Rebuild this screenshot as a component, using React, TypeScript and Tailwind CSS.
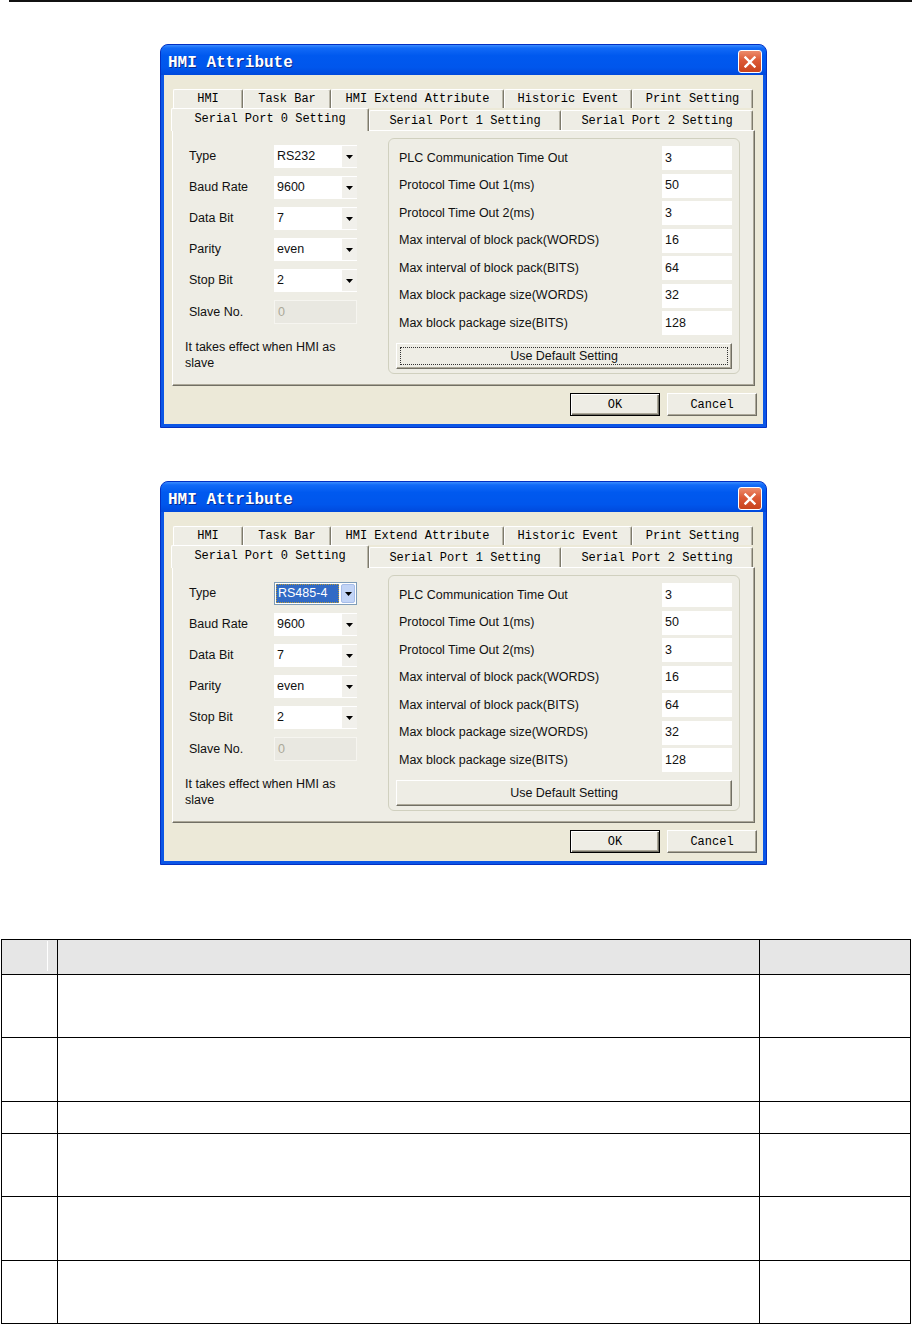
import React from "react"

const mono = "font-['Liberation_Mono','DejaVu_Sans_Mono',monospace]"
const sans = "font-['Liberation_Sans',Arial,sans-serif]"

function Arrow({ className = "" }: { className?: string }) {
  return (
    <svg width="7" height="4" viewBox="0 0 7 4" className={className}>
      <polygon points="0,0 7,0 3.5,4" fill="#000" />
    </svg>
  )
}

function Combo({ value, active }: { value: string; active?: boolean }) {
  if (active) {
    return (
      <div className="flex h-[23px] w-[83px] items-center border border-[#7f9db9] bg-white p-px">
        <div className="flex h-full flex-1 items-center">
          <span className="flex h-[19px] w-[63px] items-center border border-dotted border-[#b89a3a] bg-[#316ac5] pl-[1px] text-white">
            {value}
          </span>
        </div>
        <div className="flex h-full w-[14px] items-center justify-center rounded-[2px] border border-[#a7bde9] bg-[#c2d4f6]">
          <Arrow />
        </div>
      </div>
    )
  }
  return (
    <div className="flex h-[23px] w-[83px] items-center bg-white">
      <span className="flex-1 pl-[3px]">{value}</span>
      <div className="flex h-[21px] w-[15px] items-center justify-center bg-[#f1f0eb]">
        <Arrow />
      </div>
    </div>
  )
}

function Tab({ label, w, h, selected }: { label: string; w: number; h: string; selected?: boolean }) {
  return (
    <div
      style={{ width: w }}
      className={`flex shrink-0 items-center justify-center rounded-t-[2px] border-l border-t border-r border-l-white border-t-white border-r-[#7d7a6c] bg-[#eeede5] shadow-[inset_-1px_0_0_#b9b6a8] ${h} ${
        selected ? "relative z-10 -mb-px pb-[3px]" : ""
      }`}
    >
      {label}
    </div>
  )
}

function ClassicButton({ label, isDefault, focus, className = "" }: { label: string; isDefault?: boolean; focus?: boolean; className?: string }) {
  return (
    <div
      className={`flex items-center justify-center bg-[#eeede5] ${
        isDefault
          ? "border border-black shadow-[inset_1px_1px_0_#fff,inset_-1px_-1px_0_#716f64,inset_-2px_-2px_0_#aca899]"
          : "border border-t-white border-l-white border-r-[#716f64] border-b-[#716f64] shadow-[inset_-1px_-1px_0_#aca899]"
      } ${className}`}
    >
      {focus ? (
        <div className="flex h-[calc(100%-6px)] w-[calc(100%-6px)] items-center justify-center border border-dotted border-[#333]">
          {label}
        </div>
      ) : (
        label
      )}
    </div>
  )
}

const leftRows: [string, string][] = [
  ["Type", "RS232"],
  ["Baud Rate", "9600"],
  ["Data Bit", "7"],
  ["Parity", "even"],
  ["Stop Bit", "2"],
]

const rightRows: [string, string][] = [
  ["PLC Communication Time Out", "3"],
  ["Protocol Time Out 1(ms)", "50"],
  ["Protocol Time Out 2(ms)", "3"],
  ["Max interval of block pack(WORDS)", "16"],
  ["Max interval of block pack(BITS)", "64"],
  ["Max block package size(WORDS)", "32"],
  ["Max block package size(BITS)", "128"],
]

function Dialog({ rs485 }: { rs485?: boolean }) {
  return (
    <div className="w-[607px] overflow-hidden rounded-t-[8px] border border-[#0330c2] bg-[#0b56e6]">
      {/* title bar */}
      <div className="flex h-[30px] items-start justify-between bg-[linear-gradient(180deg,#3b8dff_0%,#126af7_10%,#0059ef_35%,#0056ec_75%,#0049dc_100%)] pl-[7px] pr-[4px]">
        <span className={`${mono} mt-[10px] text-[16px] leading-[16px] font-bold text-white [text-shadow:1px_1px_0_#0a2a90]`}>
          HMI Attribute
        </span>
        <div className="mt-[5px] flex h-[23px] w-[24px] items-center justify-center rounded-[3px] border border-white bg-[linear-gradient(180deg,#ec8c6c_0%,#dc5a36_45%,#c8431d_100%)]">
          <svg width="12" height="12" viewBox="0 0 12 12">
            <path d="M1.5 1.5 L10.5 10.5 M10.5 1.5 L1.5 10.5" stroke="#fff" strokeWidth="2.4" strokeLinecap="square" />
          </svg>
        </div>
      </div>

      {/* body */}
      <div className={`mx-[3px] mb-[3px] flex h-[349px] flex-col bg-[#ece9d8] pt-[14px] ${mono} text-[12px] text-black`}>
        {/* tab row 1 */}
        <div className="ml-[9px] flex h-[19px]">
          <Tab label="HMI" w={70} h="h-[19px]" />
          <Tab label="Task Bar" w={88} h="h-[19px]" />
          <Tab label="HMI Extend Attribute" w={173} h="h-[19px]" />
          <Tab label="Historic Event" w={128} h="h-[19px]" />
          <Tab label="Print Setting" w={121} h="h-[19px]" />
        </div>
        {/* tab row 2 */}
        <div className="ml-[7px] flex h-[22px] items-end">
          <Tab label="Serial Port 0 Setting" w={198} h="h-[23px]" selected />
          <Tab label="Serial Port 1 Setting" w={192} h="h-[20px]" />
          <Tab label="Serial Port 2 Setting" w={192} h="h-[20px]" />
        </div>

        {/* panel */}
        <div className={`ml-[8px] flex h-[256px] w-[583px] items-start border border-t-white border-l-white border-r-[#716f64] border-b-[#716f64] bg-[#eeede5] pt-[7px] pl-[16px] shadow-[inset_-1px_-1px_0_#aca899] ${sans} text-[12.5px] text-[#111]`}>
          {/* left column */}
          <div className="mt-[7px] flex w-[168px] flex-col">
            <div className="flex flex-col gap-[8px]">
              {leftRows.map(([label, value], i) => (
                <div key={label} className="flex h-[23px] items-center">
                  <span className="w-[85px]">{label}</span>
                  <Combo value={i === 0 && rs485 ? "RS485-4" : value} active={i === 0 && rs485} />
                </div>
              ))}
              <div className="flex h-[24px] items-center">
                <span className="w-[85px]">Slave No.</span>
                <div className="flex h-[24px] w-[83px] items-center border border-[#f6f5f0] bg-[#e9e8e1] pl-[3px] text-[#aca899]">0</div>
              </div>
            </div>
            <p className="-ml-[4px] mt-[15px] leading-[16px]">
              It takes effect when HMI as
              <br />
              slave
            </p>
          </div>

          {/* right group */}
          <div className="ml-[31px] flex h-[236px] w-[352px] flex-col rounded-[6px] border border-[#d0d0bf] px-[7px] pt-[7px]">
            <div className="flex flex-col gap-[3.5px]">
              {rightRows.map(([label, value]) => (
                <div key={label} className="flex h-[24px] items-center justify-between">
                  <span className="pl-[3px]">{label}</span>
                  <div className="flex h-[24px] w-[70px] items-center bg-white pl-[3px]">{value}</div>
                </div>
              ))}
            </div>
            <ClassicButton label="Use Default Setting" focus={!rs485} className="mt-[8px] h-[26px] w-full" />
          </div>
        </div>

        {/* buttons */}
        <div className="mt-[7px] flex justify-end gap-[7px] pr-[6px]">
          <ClassicButton label="OK" isDefault className="h-[23px] w-[90px]" />
          <ClassicButton label="Cancel" className="h-[23px] w-[90px]" />
        </div>
      </div>
    </div>
  )
}

const tableRows = [63, 64, 32, 63, 64, 63]

export default function App() {
  return (
    <div className="flex h-[1325px] w-[921px] flex-col overflow-hidden bg-white">
      <div className="ml-[9px] h-[2px] w-[903px] bg-[#111]" />

      <div className="ml-[160px] mt-[42px]">
        <Dialog />
      </div>
      <div className="ml-[160px] mt-[53px]">
        <Dialog rs485 />
      </div>

      {/* table */}
      <div className="ml-[1px] mt-[74px] w-[910px] border-t border-l border-r border-black">
        <div className="grid h-[35px] grid-cols-[56px_702px_1fr] border-b border-black bg-[#e6e6e6]">
          <div className="flex items-start justify-end border-r border-black pt-px pr-[9px]">
            <div className="h-[30px] w-px bg-white" />
          </div>
          <div className="border-r border-black" />
          <div />
        </div>
        {tableRows.map((h, i) => (
          <div key={i} style={{ height: h }} className="grid grid-cols-[56px_702px_1fr] border-b border-black">
            <div className="border-r border-black" />
            <div className="border-r border-black" />
            <div />
          </div>
        ))}
      </div>
    </div>
  )
}
